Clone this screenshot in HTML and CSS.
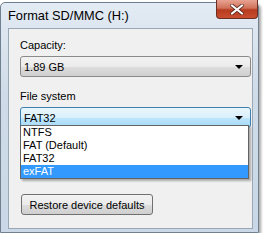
FILE: index.html
```html
<!DOCTYPE html>
<html>
<head>
<meta charset="utf-8">
<link rel="stylesheet" href="styles.css">
</head>
<body>
<div class="window">
  <div class="titlebar">
    <span class="title">Format SD/MMC (H:)</span>
    <div class="close"><svg width="14" height="11" viewBox="0 0 14 11"><path d="M2 1.5 L12 9.5 M12 1.5 L2 9.5" stroke="#5a2a20" stroke-width="3.6" stroke-linecap="round"/><path d="M2 1.5 L12 9.5 M12 1.5 L2 9.5" stroke="#ffffff" stroke-width="2.2" stroke-linecap="round"/></svg></div>
  </div>
  <div class="client">
    <div class="label">Capacity:</div>
    <div class="combo"><span>1.89 GB</span><span class="arrow"></span></div>
    <div class="label label2">File system</div>
    <div class="combo-wrap">
      <div class="combo combo-active"><span>FAT32</span><span class="arrow"></span></div>
      <ul class="list">
        <li>NTFS</li>
        <li>FAT (Default)</li>
        <li>FAT32</li>
        <li class="sel">exFAT</li>
      </ul>
    </div>
    <button class="btn">Restore device defaults</button>
  </div>
</div>
</body>
</html>
```
FILE: styles.css
```css
html, body { margin: 0; padding: 0; background: #ffffff; }
body { font-family: "Liberation Sans", Arial, sans-serif; font-size: 11px; color: #000; }
.window {
  width: 257px; height: 229px; margin-top: 2px;
  border: 1px solid #70808f;
  border-radius: 5px 5px 0 0;
  background: linear-gradient(#e3ebf4, #cfdbe8 40%, #c9d7e6);
  box-shadow: 2px 2px 3px rgba(0,0,0,0.35);
  display: flex; flex-direction: column;
  box-sizing: content-box;
}
.titlebar { height: 25px; display: flex; justify-content: space-between; align-items: flex-start; }
.title { padding: 6px 0 0 7px; font-size: 12.8px; color: #000; line-height: 14px; }
.close {
  width: 40px; height: 18px; margin: -3px 0 0 0;
  border: 1px solid #6a2e22; border-top: none;
  border-radius: 0 0 4px 4px;
  background: linear-gradient(#e8a392, #d0715a 45%, #b73b1f 55%, #c94d2f);
  display: flex; align-items: center; justify-content: center;
}
.client {
  margin: 0 5px 3px 7px; flex: 1;
  border: 1px solid #9aa8b6;
  background: #f0f0f0;
  padding: 0 0 0 11px;
  display: flex; flex-direction: column; align-items: flex-start;
}
.label { margin-top: 9px; height: 15px; line-height: 15px; }
.label2 { margin-top: 12px; }
.combo {
  margin-top: 3px;
  width: 226px; height: 19px;
  border: 1px solid #8a8a8a; border-radius: 3px;
  background: linear-gradient(#f2f2f2, #ebebeb 50%, #dddddd 51%, #cfcfcf);
  display: flex; align-items: center; justify-content: space-between;
  padding-left: 3px; box-sizing: content-box;
  line-height: 14px;
}
.combo-active {
  border-color: #3c7fb1;
  background: linear-gradient(#eaf6fd, #d9f0fc 50%, #bee6fd 51%, #a7d9f5);
}
.arrow {
  width: 0; height: 0; margin-right: 7px;
  border-left: 4px solid transparent; border-right: 4px solid transparent;
  border-top: 4px solid #000;
}
.combo-wrap { position: relative; }
.list {
  position: absolute; left: 0; top: 21px;
  width: 227px; margin: 0; padding: 0;
  list-style: none; background: #fff;
  border: 1px solid #646464;
  box-shadow: 2px 2px 2px rgba(0,0,0,0.3);
}
.list li { height: 13px; line-height: 13px; padding-left: 2px; font-size: 11px; }
.list li.sel { background: #3399ff; color: #fff; }
.btn {
  margin-top: 66px; margin-left: 1px;
  width: 132px; height: 21px;
  border: 1px solid #707070; border-radius: 3px;
  background: linear-gradient(#f2f2f2, #ebebeb 50%, #dddddd 51%, #cfcfcf);
  font-family: inherit; font-size: 11px; color: #000; padding: 0;
  white-space: nowrap;
}
```
